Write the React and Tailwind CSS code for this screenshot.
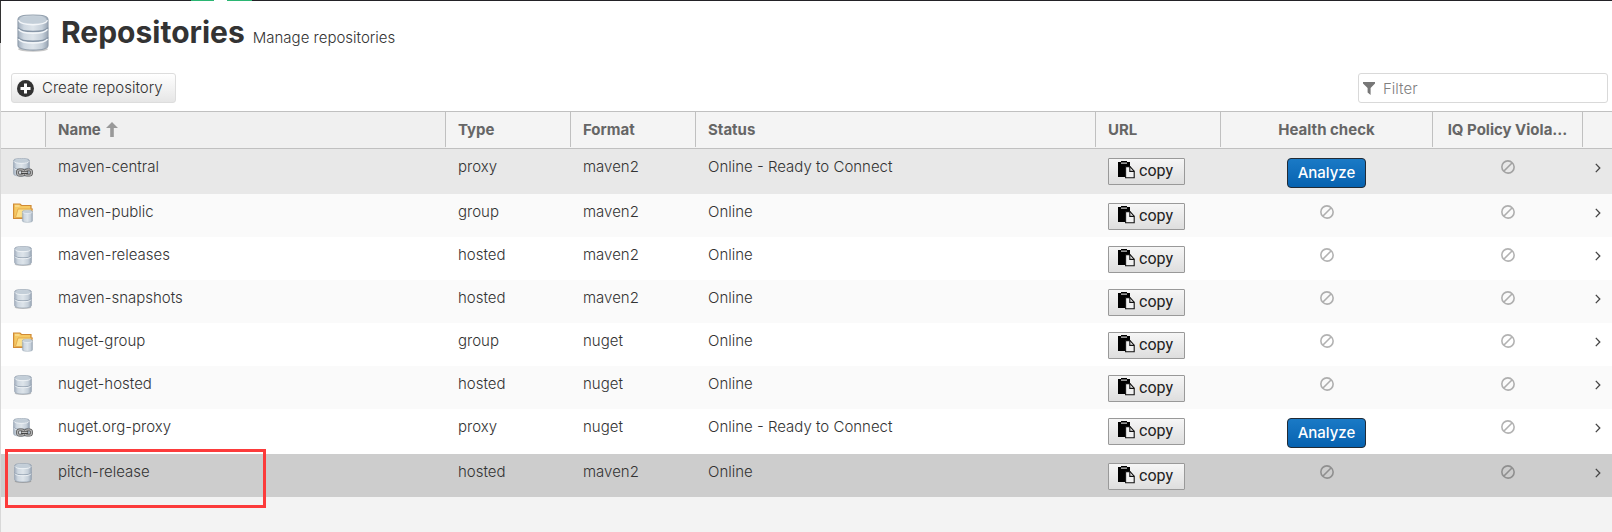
import { useId, useState } from "react";

function CylinderBands({ bands, id }) {
  const h = 30 / bands;
  return (
    <>
      <defs>
        <linearGradient id={id} x1="0" x2="1" y1="0" y2="0">
          <stop offset="0" stopColor="#a3b0bf" />
          <stop offset="0.2" stopColor="#cfd8e1" />
          <stop offset="0.5" stopColor="#dde4ea" />
          <stop offset="0.8" stopColor="#c6d0da" />
          <stop offset="1" stopColor="#98a5b4" />
        </linearGradient>
      </defs>
      <path
        d="M1 6C1 2 6 1 16 1s15 1 15 5v26c0 3-5 5-15 5S1 35 1 32z"
        fill={`url(#${id})`}
        stroke="#93a0ae"
        strokeWidth="1.2"
      />
      <ellipse cx="16" cy="6" rx="13.5" ry="4" fill="#c3ced8" />
      <path d="M1.5 6.5C3 10 8 11 16 11s13-1 14.5-4.5" fill="none" stroke="#f3f6f9" strokeWidth="1.5" />
      {Array.from({ length: bands - 1 }, (_, i) => (
        <g key={i} transform={`translate(0 ${(i + 1) * h - 1})`}>
          <path d="M1 5c2 3 7 4 15 4s13-1 15-4" fill="none" stroke="#8796a7" strokeWidth="1.5" />
          <path d="M1.5 6.8c2 3 7 4 14.5 4s12.5-1 14.5-4" fill="none" stroke="#f3f6f9" strokeWidth="1.5" />
        </g>
      ))}
    </>
  );
}

function Database({ className, bands = 2 }) {
  const id = useId();
  return (
    <svg viewBox="0 0 32 39" preserveAspectRatio="none" className={className} aria-hidden="true">
      <ellipse cx="16" cy="36" rx="15" ry="2.8" fill="#000" opacity="0.22" />
      <CylinderBands bands={bands} id={id} />
    </svg>
  );
}

function ProxyIcon() {
  const id = useId();
  return (
    <svg viewBox="0 0 20 20" className="block size-5" aria-hidden="true">
      <g transform="scale(0.53 0.49)">
        <CylinderBands bands={2} id={id} />
      </g>
      <g fill="none">
        <rect x="4.5" y="11.8" width="6.5" height="5.4" rx="2.2" stroke="#505050" strokeWidth="2.8" />
        <rect x="12" y="11.8" width="6.5" height="5.4" rx="2.2" stroke="#505050" strokeWidth="2.8" />
        <rect x="4.5" y="11.8" width="6.5" height="5.4" rx="2.2" stroke="#b4b4b4" strokeWidth="1.3" />
        <rect x="12" y="11.8" width="6.5" height="5.4" rx="2.2" stroke="#b4b4b4" strokeWidth="1.3" />
        <path d="M8 14.5h7" stroke="#3c3c3c" strokeWidth="2.8" />
        <path d="M8.500 14.300h6" stroke="#d6d6d6" strokeWidth="1.1" />
      </g>
    </svg>
  );
}

function GroupIcon() {
  const id = useId();
  return (
    <svg viewBox="0 0 20 20" className="block size-5" aria-hidden="true">
      <path d="M.6 1h6.400l1.500 1.500H18V6h1.200l-2 9.500H.6z" fill="#f6c963" stroke="#d08a35" strokeWidth="1.2" />
      <path d="M2.500 14.500 5 6h13.500l-2 8.500z" fill="#fce08c" stroke="#e0a245" strokeWidth="0.8" />
      <path d="M2 3h4.500" stroke="#fdeab0" />
      <g transform="translate(9 6.800) scale(0.34 0.34)">
        <CylinderBands bands={1} id={id} />
      </g>
    </svg>
  );
}

function ClipboardIcon() {
  return (
    <svg viewBox="0 0 17 18" className="block h-[18px] w-[17px]" aria-hidden="true">
      <path d="M0 1h3V0h6v1h3v6H7v9H0z" fill="#000" />
      <path d="M3 1.500h6v1.300H3z" fill="#bbb" />
      <path d="M7.600 5.600h4.400l4.200 4.600v6.600H7.600z" fill="#f1f1f1" stroke="#111" strokeWidth="1.100" />
      <path d="M11.800 5.600v4.800h4.400" fill="none" stroke="#111" strokeWidth="1.100" />
    </svg>
  );
}

function Unavailable() {
  return (
    <svg viewBox="0 0 14 14" className="mx-auto mt-[11px] block size-[14px] text-black/30" role="img" aria-label="Not available">
      <g fill="none" stroke="currentColor" strokeWidth="1.6">
        <path d="M2.760 11.240A6 6 0 1 1 11.240 2.760A6 6 0 1 1 2.760 11.240L11.240 2.760" />
      </g>
    </svg>
  );
}

const repositories = [
  { name: "maven-central", type: "proxy", format: "maven2", status: "Online - Ready to Connect", row: "h-[45px] bg-[#e8e8e8]" },
  { name: "maven-public", type: "group", format: "maven2", status: "Online", row: "h-[43px] bg-[#fafafa]" },
  { name: "maven-releases", type: "hosted", format: "maven2", status: "Online", row: "h-[43px] bg-white" },
  { name: "maven-snapshots", type: "hosted", format: "maven2", status: "Online", row: "h-[43px] bg-[#fafafa]" },
  { name: "nuget-group", type: "group", format: "nuget", status: "Online", row: "h-[43px] bg-white" },
  { name: "nuget-hosted", type: "hosted", format: "nuget", status: "Online", row: "h-[43px] bg-[#fafafa]" },
  { name: "nuget.org-proxy", type: "proxy", format: "nuget", status: "Online - Ready to Connect", row: "h-[45px] bg-white" },
  { name: "pitch-release", type: "hosted", format: "maven2", status: "Online", row: "h-[43px] bg-[#cdcdcd]", marked: true },
];

function TypeIcon({ type }) {
  if (type === "proxy") return <ProxyIcon />;
  if (type === "group") return <GroupIcon />;
  return <Database className="ml-px block h-5 w-[18px]" />;
}

function HeaderCell({ children, className = "" }) {
  return (
    <th scope="col" className={`h-9 p-0 font-bold ${className}`}>
      <div className="mb-px flex h-[35px] items-center border-r border-[#c0c0c0] px-3">{children}</div>
    </th>
  );
}

function RepositoryRow({ repo }) {
  return (
    <tr className={`align-top ${repo.row}`}>
      <td className="relative p-0 pt-[9px] pl-3">
        <TypeIcon type={repo.type} />
        {repo.marked && (
          <span className="pointer-events-none absolute -top-[5px] left-1 h-[59px] w-[261px] border-3 border-[#fc3b3b]" />
        )}
      </td>
      <td className="px-3 pt-2">{repo.name}</td>
      <td className="px-3 pt-2">{repo.type}</td>
      <td className="px-3 pt-2">{repo.format}</td>
      <td className="px-3 pt-2">{repo.status}</td>
      <td className="p-0 pt-[9px] pl-3">
        <button
          type="button"
          className="flex h-[27px] w-[77px] items-start gap-1 rounded-[1px] border border-[#999] bg-linear-to-b from-[#f6f6f6] to-[#dedede] pt-[2px] pl-[9px] font-['Roboto',sans-serif] text-[16px] leading-5 font-normal text-[#222]"
        >
          <ClipboardIcon />
          copy
        </button>
      </td>
      <td className="p-0 pr-px">
        {repo.type === "proxy" ? (
          <button
            type="button"
            className="mx-auto mt-[9px] block h-[30px] w-[79px] rounded-[4px] border border-[#222b35] bg-linear-to-b from-[#1a7ac6] to-[#0662b0] text-[15px] leading-7 font-medium text-white"
          >
            Analyze
          </button>
        ) : (
          <Unavailable />
        )}
      </td>
      <td className="p-0">
        <Unavailable />
      </td>
      <td className="p-0">
        <svg viewBox="0 0 6 10" className="mt-[14px] ml-3 block h-[10px] w-[6px]" aria-hidden="true">
          <path d="M.8.9 4.800 5 .8 9.100" fill="none" stroke="#444" strokeWidth="1.300" />
        </svg>
      </td>
    </tr>
  );
}

export default function App() {
  const [filter, setFilter] = useState("");
  const shown = repositories.filter((r) => r.name.includes(filter));
  return (
    <div className="min-h-screen bg-[#f3f3f3] font-['Inter',sans-serif] text-[15px] leading-5 font-light text-[#333]">
      <div className="flex h-px bg-[#232227]">
        <span className="ml-[191px] w-[23px] bg-[#2bb673]" />
        <span className="w-[13px] bg-white" />
        <span className="w-[25px] bg-[#2bb673]" />
      </div>
      <div className="flex">
        <div className="flex w-px flex-col self-stretch bg-[#d8d8d8]">
          <span className="h-[42px] bg-[#333]" />
        </div>
        <main className="min-h-[calc(100vh-1px)] min-w-0 flex-1">
          <div className="bg-white">
            <header className="flex h-[72px] items-start pt-[13px] pl-4">
              <Database bands={3} className="block h-[38px] w-8" />
              <div className="ml-3 flex items-baseline gap-2">
                <h1 className="text-[30px] leading-9 font-bold">Repositories</h1>
                <p>Manage repositories</p>
              </div>
            </header>
            <div className="flex h-[38px] items-start justify-between pr-1 pl-[10px]">
              <button
                type="button"
                className="flex h-[30px] items-center gap-2 rounded-[3px] border border-[#ddd] bg-linear-to-b from-white to-[#e6e6e6] pr-3 pl-[5px]"
              >
                <svg viewBox="0 0 17 17" className="size-[17px]" aria-hidden="true">
                  <circle cx="8.5" cy="8.5" r="8.5" fill="#333" />
                  <path d="M8.500 3.500v10M3.500 8.500h10" stroke="#fff" strokeWidth="3" />
                </svg>
                Create repository
              </button>
              <label className="flex h-[30px] w-[250px] items-center gap-2 rounded-[3px] border border-[#d9d9d9] bg-white pl-1">
                <svg viewBox="0 0 12 13" className="h-[13px] w-3" aria-hidden="true">
                  <path d="M0 0h12v1.500L7.600 6v7L4.600 10.500V6L0 1.500z" fill="#777" />
                </svg>
                <input
                  type="text"
                  aria-label="Filter"
                  value={filter}
                  onChange={(e) => setFilter(e.target.value)}
                  placeholder="Filter"
                  className="h-7 min-w-0 flex-1 bg-transparent outline-none placeholder:text-[#808080]"
                />
              </label>
            </div>
          </div>
          <table className="w-full table-fixed border-collapse">
            <colgroup>
              <col className="w-[45px]" />
              <col className="w-[400px]" />
              <col className="w-[125px]" />
              <col className="w-[125px]" />
              <col />
              <col className="w-[125px]" />
              <col className="w-[212px]" />
              <col className="w-[150px]" />
              <col className="w-[29px]" />
            </colgroup>
            <thead className="border-y border-[#c0c0c0] bg-[#f4f4f4] text-left text-[#666]">
              <tr>
                <HeaderCell />
                <HeaderCell className="bg-[#f0f0f0]">
                  Name
                  <svg viewBox="0 0 12 15" className="ml-[5px] h-[15px] w-3" aria-hidden="true">
                    <path d="M6 0l6 6H7.800v9H4.200V6H0z" fill="#999" />
                  </svg>
                </HeaderCell>
                <HeaderCell>Type</HeaderCell>
                <HeaderCell>Format</HeaderCell>
                <HeaderCell>Status</HeaderCell>
                <HeaderCell>URL</HeaderCell>
                <HeaderCell>
                  <span className="flex-1 text-center">Health check</span>
                </HeaderCell>
                <HeaderCell>
                  <span className="flex-1 text-center whitespace-nowrap">IQ Policy Viola...</span>
                </HeaderCell>
                <th className="p-0" />
              </tr>
            </thead>
            <tbody>
              {shown.map((repo) => (
                <RepositoryRow key={repo.name} repo={repo} />
              ))}
            </tbody>
          </table>
        </main>
      </div>
    </div>
  );
}
